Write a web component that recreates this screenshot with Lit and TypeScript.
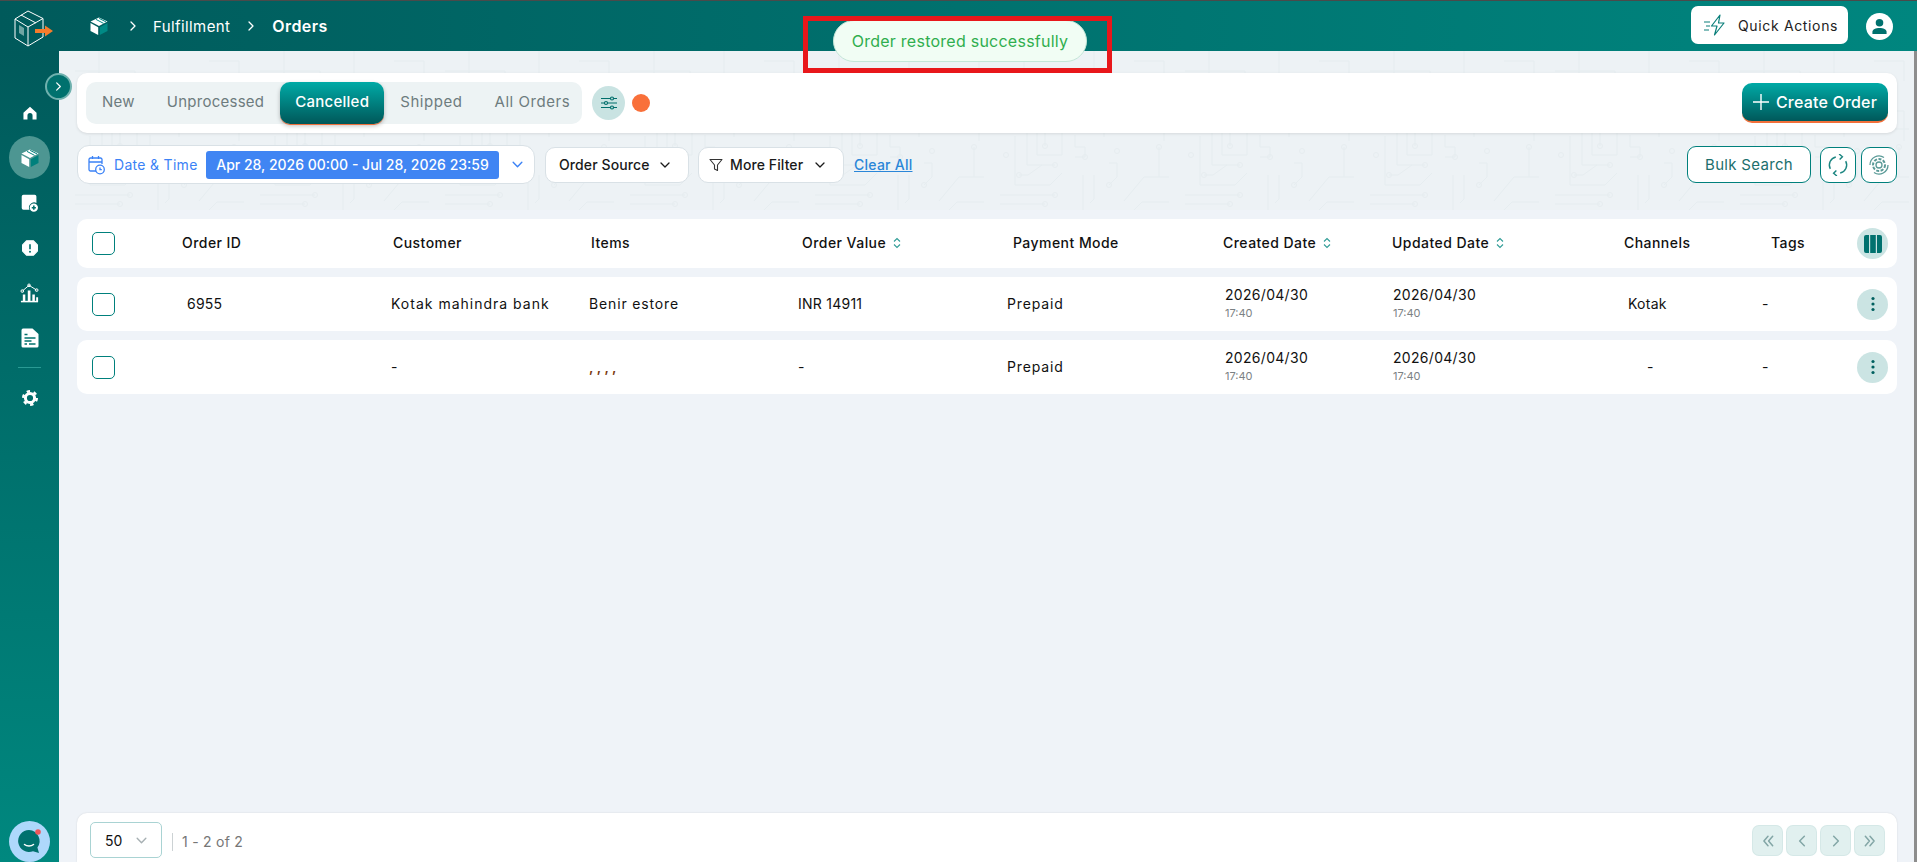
import { html, css, LitElement, svg } from "lit";
import { customElement } from "lit/decorators.js";

const chevron = (size = 12, color = "currentColor", d = "M2 4l4 4 4-4") => html`<svg
  width=${size}
  height=${size}
  viewBox="0 0 12 12"
  fill="none"
  stroke=${color}
  stroke-width="1.3"
  stroke-linecap="round"
  stroke-linejoin="round"
>
  <path d=${d} />
</svg>`;

const sortIcon = html`<svg width="8" height="12" viewBox="0 0 8 12" fill="none" stroke="#2f9c96" stroke-width="1.1">
  <path d="M1 4.5L4 1.5l3 3M1 7.5l3 3 3-3" />
</svg>`;

const boxIcon = (w: number, side: string) => html`<svg width=${w} height=${w} viewBox="0 0 20 20">
  <path d="M10 1.5L18.5 5.5 10 10 1.5 5.5z" fill="#fff" />
  <path d="M1.5 7L9.2 11.2V19L1.5 15z" fill="#fff" />
  <path d="M10.8 11.2L18.5 7v8l-7.7 4z" fill=${side} />
  <path d="M7 3.4l7.6 4M10.2 2.4l7 3.6" stroke=${side} stroke-width="1" fill="none" />
</svg>`;

const navIcons = [
  { size: 16, icon: svg`<path d="M11 2.5L20 10.5V20H14.5V14.5a3.5 3.5 0 0 0-7 0V20H2V10.5z" fill="#fff"/>` },
  null,
  { size: 19, icon: svg`<path d="M4 2h13a2 2 0 0 1 2 2v7.5a6 6 0 0 0-8 8H4a2 2 0 0 1-2-2V4a2 2 0 0 1 2-2z" fill="#fff"/><circle cx="16" cy="17" r="4.8" fill="#fff"/><path d="M16 14.6v4.8M13.6 17h4.8" stroke="#00716c" stroke-width="1.8"/>` },
  { size: 18, icon: svg`<path d="M7 2.2h8l5 5v7.6l-5 5H7l-5-5V7.2z" fill="#fff" stroke="#fff" stroke-linejoin="round" stroke-width="1.5"/><path d="M11 6.5v6" stroke="#00716c" stroke-width="2"/><circle cx="11" cy="15.5" r="1.2" fill="#00716c"/>` },
  { size: 21, icon: svg`<path d="M2 20.5h18" stroke="#fff" stroke-width="1.6"/><path d="M4 13h2.6v7H4zM9.2 9h2.8v11H9.2zM14 13h2.6v7H14zM18 16h2v4h-2z" fill="#fff"/><path d="M3.5 9.5L10.5 3.5l8 5" stroke="#fff" stroke-width="1" fill="none"/><circle cx="3.5" cy="9.5" r="1.4" fill="none" stroke="#fff"/><circle cx="10.5" cy="3.5" r="1.4" fill="none" stroke="#fff"/><circle cx="18.5" cy="8.5" r="1.4" fill="none" stroke="#fff"/>` },
  { size: 22, icon: svg`<path d="M5 1.5h8.5L19.500 7v12a1.600 1.600 0 0 1-1.600 1.600H4.100A1.600 1.600 0 0 1 2.500 19V3.500a2 2 0 0 1 2.500-2z" fill="#fff"/><path d="M5.500 7.500h3M5.500 11h11M5.500 14h7M5.500 17h2.500M10 17h6.500" stroke="#00716c" stroke-width="1.400"/>` },
];

const headCells = [
  { label: "Order ID" },
  { label: "Customer" },
  { label: "Items" },
  { label: "Order Value", sort: true },
  { label: "Payment Mode" },
  { label: "Created Date", sort: true },
  { label: "Updated Date", sort: true },
  { label: "Channels" },
  { label: "Tags" },
];

const rows = [
  { id: "6955", customer: "Kotak mahindra bank", items: "Benir estore", value: "INR 14911", channel: "Kotak" },
  { id: "", customer: "-", items: ", , , ,", value: "-", channel: "-" },
];

@customElement("app-root")
export class AppRoot extends LitElement {
  static styles = css`
    :host {
      display: block;
      height: 862px;
      overflow: hidden;
      position: relative;
      font-family: Inter, "Liberation Sans", sans-serif;
      font-size: 14px;
      color: #111;
      background: #eff3f8;
    }
    .topbar {
      height: 50px;
      border-top: 1px solid #4a4a4a;
      background: linear-gradient(90deg, #005a5b, #00716e 50%, #00867f);
      display: flex;
      align-items: center;
      color: #fff;
    }
    .logo {
      width: 89px;
      padding: 5px 0 0 14px;
      flex: none;
      box-sizing: border-box;
      display: flex;
    }
    .crumbs {
      display: flex;
      align-items: center;
      font-size: 15px;
      letter-spacing: 0.4px;
    }
    .crumbs .sep {
      display: flex;
      margin: 0 14px 0 18px;
    }
    .crumbs .sep.second {
      margin: 0 15px;
    }
    .crumbs b {
      font-size: 16px;
      font-weight: 600;
    }
    .quick {
      margin-left: auto;
      width: 157px;
      height: 38px;
      box-sizing: border-box;
      background: #fff;
      border-radius: 7px;
      display: flex;
      align-items: center;
      gap: 11px;
      padding-left: 12px;
      color: #222;
      font-size: 14px;
      letter-spacing: 0.65px;
      margin-top: -2px;
    }
    .avatar {
      width: 27px;
      height: 27px;
      margin: 0 24px 0 18px;
      border-radius: 50%;
      background: #fff;
      display: flex;
      align-items: center;
      justify-content: center;
    }
    .body {
      display: flex;
      height: 811px;
    }
    .side {
      width: 59px;
      flex: none;
      background: linear-gradient(180deg, #005a5b, #00887f);
      display: flex;
      flex-direction: column;
      align-items: center;
      padding-top: 39px;
      box-sizing: border-box;
    }
    .nav {
      height: 45px;
      width: 59px;
      flex: none;
      display: flex;
      align-items: center;
      justify-content: center;
    }
    .nav .active {
      width: 41px;
      height: 43px;
      border-radius: 50%;
      background: #4d9692;
      display: flex;
      align-items: center;
      justify-content: center;
    }
    .side hr {
      width: 23px;
      border: none;
      border-top: 1px solid #2a9a94;
      margin: 7px 0;
    }
    .chat {
      margin-top: auto;
      width: 41px;
      height: 41px;
      display: flex;
    }
    .toggle {
      position: absolute;
      left: 45px;
      top: 73px;
      width: 27px;
      height: 27px;
      box-sizing: border-box;
      border-radius: 50%;
      background: #00716e;
      border: 2px solid #6fb1ae;
      display: flex;
      align-items: center;
      justify-content: center;
      z-index: 2;
    }
    .main {
      flex: 1;
      display: flex;
      flex-direction: column;
      min-width: 0;
      padding: 22px 17px 0 18px;
      border-right: 3px solid #8d8d8d;
      background-color: #eff3f8;
      background-repeat: repeat-x;
      background-image: url("data:image/svg+xml,%3Csvg xmlns='http://www.w3.org/2000/svg' width='185' height='159' fill='none' stroke='%23e6edf0'%3E%3Crect width='185' height='159' fill='%23edf2f5' stroke='none'/%3E%3Cpath d='M53 60v44h25V60M43 50v64h28M31 85v49h35l12-12M16 144h55M16 153h45M35 124h9l14-10M61 76v19M91 84v12h10v10H91M120 86v-8h75M99 124v35M110 124v24l-4 4M125 112h8v14l-8 8M140 150l20-24h40M150 159l8-8h60M175 96v30M188 96v50M16 20h60v20h60M40 0v30h40M110 0v40h30v14h30M150 10h30v20M20 70h14M170 60h10v30'/%3E%3Ccircle cx='61' cy='95' r='2.500'/%3E%3Ccircle cx='71' cy='114' r='2.500'/%3E%3Ccircle cx='71' cy='144' r='2.500'/%3E%3Ccircle cx='61' cy='153' r='2.500'/%3E%3Ccircle cx='35' cy='124' r='2.500'/%3E%3Ccircle cx='101' cy='106' r='2.500'/%3E%3Ccircle cx='133' cy='100' r='2.500'/%3E%3Ccircle cx='175' cy='96' r='2.500'/%3E%3Ccircle cx='188' cy='96' r='2.500'/%3E%3Ccircle cx='22' cy='104' r='2.500'/%3E%3Ccircle cx='125' cy='134' r='2.500'/%3E%3Ccircle cx='140' cy='42' r='2.500'/%3E%3Ccircle cx='80' cy='30' r='2.500'/%3E%3C/svg%3E");
    }
    .card {
      background: #fff;
      border-radius: 10px;
    }
    .tabbar {
      height: 60px;
      box-sizing: border-box;
      padding: 9px;
      display: flex;
      align-items: flex-start;
      box-shadow: 0 1px 3px rgba(0, 0, 0, 0.1);
      flex: none;
    }
    .tabs {
      display: flex;
      width: 496px;
      flex: none;
      height: 42px;
      background: #edf3f4;
      border-radius: 10px;
      font-size: 15px;
      letter-spacing: 0.25px;
      color: #6d7c7e;
    }
    .tab {
      padding: 0 16px 3px;
      display: flex;
      align-items: center;
      flex: none;
      white-space: nowrap;
    }
    .tab.late {
      letter-spacing: 0.55px;
    }
    .tab.on {
      width: 104px;
      box-sizing: border-box;
      justify-content: center;
      padding: 0 0 3px;
      border-radius: 10px;
      color: #fff;
      font-weight: 500;
      background: linear-gradient(180deg, #00aaa6, #005759);
      box-shadow: 0 1px 0 #f0703c, 0 2px 4px rgba(0, 0, 0, 0.25);
    }
    .tune {
      width: 33px;
      height: 34px;
      margin: 4px 0 0 10px;
      border-radius: 50%;
      background: #c9e3e2;
      display: flex;
      align-items: center;
      justify-content: center;
    }
    .dot {
      width: 18px;
      height: 18px;
      margin: 12px 0 0 7px;
      border-radius: 50%;
      background: #f9703a;
    }
    .create {
      margin-left: auto;
      margin-top: 1px;
      width: 146px;
      height: 40px;
      box-sizing: border-box;
      border-radius: 10px;
      border-bottom: 2px solid #f2703a;
      background: linear-gradient(180deg, #00aaa6, #00585a);
      color: #fff;
      display: flex;
      align-items: center;
      justify-content: center;
      gap: 7px;
      font-size: 16px;
      font-weight: 500;
      letter-spacing: 0.2px;
    }
    .filters {
      height: 39px;
      margin-top: 12px;
      display: flex;
      align-items: center;
      flex: none;
    }
    .box {
      background: #fff;
      border: 1px solid #d9e1e6;
      border-radius: 10px;
      height: 36px;
      box-sizing: border-box;
      display: flex;
      align-items: center;
      font-size: 14px;
      letter-spacing: 0.1px;
      color: #1a1a1a;
      font-weight: 500;
    }
    .date {
      width: 458px;
      height: 39px;
      padding-left: 10px;
      color: #3b82f6;
      border-radius: 12px;
    }
    .date .label {
      margin-left: 9px;
      width: 92px;
      font-weight: 400;
      letter-spacing: 0.3px;
    }
    .range {
      width: 293px;
      height: 28px;
      background: #4085f3;
      color: #fff;
      border-radius: 3px;
      display: flex;
      align-items: center;
      justify-content: center;
      font-size: 14px;
      letter-spacing: 0;
    }
    .date .caret {
      display: flex;
      margin-left: 12px;
    }
    .source {
      width: 144px;
      margin-left: 10px;
      padding-left: 13px;
      gap: 10px;
    }
    .more {
      width: 146px;
      margin-left: 9px;
      padding-left: 10px;
      gap: 7px;
    }
    .more svg:last-child {
      margin-left: 4px;
    }
    .clear {
      margin-left: 10px;
      color: #2a86d8;
      text-decoration: underline;
      font-size: 14px;
      letter-spacing: 0.25px;
      font-weight: 500;
    }
    .outline {
      border: 1px solid #00807c;
      border-radius: 9px;
      background: #fff;
      height: 36px;
      box-sizing: border-box;
      display: flex;
      align-items: center;
      justify-content: center;
    }
    .bulk {
      margin-left: auto;
      width: 124px;
      height: 37px;
      padding-bottom: 1px;
      color: #1c6f6d;
      font-size: 15px;
      letter-spacing: 0.3px;
    }
    .square {
      width: 36px;
      margin-left: 9px;
    }
    .square + .square {
      margin-left: 5px;
    }
    .head,
    .row {
      display: grid;
      align-items: center;
      padding-left: 15px;
      flex: none;
    }
    .head {
      height: 49px;
      margin-top: 35px;
      grid-template-columns: 90px 211px 198px 211px 211px 210px 169px 232px 147px 86px 31px;
      font-weight: 500;
      letter-spacing: 0.45px;
    }
    .head span {
      display: flex;
      align-items: center;
      gap: 7px;
      padding-bottom: 2px;
    }
    .row {
      height: 54px;
      margin-top: 9px;
      grid-template-columns: 95px 204px 198px 209px 209px 218px 168px 235px 134px 95px 31px;
      letter-spacing: 0.25px;
    }
    .row span {
      padding-bottom: 2px;
    }
    .row .name {
      letter-spacing: 1px;
    }
    .row .name.short {
      letter-spacing: 0.85px;
    }
    .row .dash {
      margin-left: 19px;
    }
    .row .items-odd {
      color: #7a3b10;
      font-weight: 600;
      letter-spacing: 0;
    }
    .check {
      width: 23px;
      height: 23px;
      box-sizing: border-box;
      border: 1.5px solid #00807c;
      border-radius: 5px;
    }
    .stamp {
      line-height: 18px;
      letter-spacing: 0.3px;
    }
    .stamp small {
      display: block;
      font-size: 11px;
      color: #7b8184;
      letter-spacing: 0;
    }
    .round {
      width: 31px;
      height: 31px;
      border-radius: 50%;
      background: #cbe4e3;
      display: flex;
      align-items: center;
      justify-content: center;
    }
    .pager {
      margin-top: auto;
      height: 49px;
      border-radius: 10px 10px 0 0;
      box-sizing: border-box;
      padding: 9px 13px 0;
      display: flex;
      align-items: flex-start;
      box-shadow: 0 0 2px rgba(0, 0, 0, 0.12);
      flex: none;
    }
    .size {
      width: 72px;
      height: 36px;
      box-sizing: border-box;
      border: 1px solid #a9d3d3;
      border-radius: 5px;
      display: flex;
      align-items: center;
      gap: 13px;
      padding-left: 14px;
    }
    .count {
      margin-left: 10px;
      padding-left: 9px;
      border-left: 1px solid #ccd2d4;
      height: 18px;
      align-self: center;
      line-height: 18px;
      color: #767676;
      letter-spacing: 0.25px;
    }
    .pages {
      margin-left: auto;
      display: flex;
      gap: 5px;
      margin-top: 4px;
    }
    .pages span {
      width: 29px;
      height: 29px;
      border-radius: 6px;
      background: #e1f0ef;
      box-shadow: 0 0 0 1px #d5e8e7;
      display: flex;
      align-items: center;
      justify-content: center;
    }
    .toast {
      position: absolute;
      left: 833px;
      top: 20px;
      width: 254px;
      height: 42px;
      box-sizing: border-box;
      border-radius: 21px;
      border: 1px solid #c4e6d8;
      background: #f1fdf4;
      color: #2fae4e;
      font-size: 16px;
      display: flex;
      align-items: center;
      justify-content: center;
      letter-spacing: 0.25px;
      z-index: 3;
    }
    .callout {
      position: absolute;
      left: 803px;
      top: 16px;
      width: 309px;
      height: 57px;
      box-sizing: border-box;
      border: 5px solid #e8171b;
      z-index: 4;
    }
  `;

  render() {
    return html`
      <div class="topbar">
        <div class="logo">${this.logo()}</div>
        <div class="crumbs">
          ${boxIcon(20, "#008a85")}
          <span class="sep">${chevron(12, "#fff", "M4 2l4 4-4 4")}</span>
          <span>Fulfillment</span>
          <span class="sep second">${chevron(12, "#fff", "M4 2l4 4-4 4")}</span>
          <b>Orders</b>
        </div>
        <div class="quick">
          <svg width="24" height="26" viewBox="0 0 24 26" fill="none" stroke="#0a7f7a" stroke-width="1.2" stroke-linejoin="round">
            <path d="M17 3L8.500 14h5.500l-2.500 9L21 11h-5.500z" />
            <path d="M1 10h6M3 14h4M1 18h5" />
          </svg>
          Quick Actions
        </div>
        <div class="avatar">
          <svg width="17" height="17" viewBox="0 0 18 18" fill="#00716e">
            <circle cx="9" cy="5" r="4" />
            <path d="M1.500 17v-2.500C1.500 12 5 10.500 9 10.500s7.500 1.500 7.500 4V17z" />
          </svg>
        </div>
      </div>
      <div class="body">
        <aside class="side">
          ${navIcons.map(
            (n) => html`<div class="nav">
              ${n
                ? html`<svg width=${n.size} height=${n.size} viewBox="0 0 22 22">${n.icon}</svg>`
                : html`<div class="active">${boxIcon(20, "#00807c")}</div>`}
            </div>`
          )}
          <hr />
          <div class="nav">
            <svg width="16" height="16" viewBox="0 0 16 16" fill="none" stroke="#fff">
              <circle cx="8" cy="8" r="4.600" stroke-width="3" />
              <circle cx="8" cy="8" r="6.800" stroke-width="2.400" stroke-dasharray="3.400 3.720" />
            </svg>
          </div>
          <div class="chat">
            <svg width="41" height="41" viewBox="0 0 41 41">
              <circle cx="20.500" cy="20.500" r="20.500" fill="#aed8fb" />
              <path d="M20 9a11 11 0 1 0 4 21.300l6 1.700-1.600-5.500A11 11 0 0 0 20 9z" fill="#00716e" />
              <path d="M15.500 23.500c2.500 2 6.500 2 9 0" stroke="#fff" stroke-width="1.500" fill="none" stroke-linecap="round" />
              <circle cx="29" cy="11" r="2.800" fill="#f0565a" />
            </svg>
          </div>
        </aside>
        <main class="main">
          <div class="card tabbar">
            <div class="tabs">
              <div class="tab">New</div>
              <div class="tab">Unprocessed</div>
              <div class="tab on">Cancelled</div>
              <div class="tab late">Shipped</div>
              <div class="tab late">All Orders</div>
            </div>
            <div class="tune">
              <svg width="16" height="14" viewBox="0 0 16 14" fill="none" stroke="#006e6b" stroke-width="1.200">
                <path d="M0 2.500h16M0 7h16M0 11.500h16" />
                <circle cx="11" cy="2.500" r="1.500" fill="#c9e3e2" />
                <circle cx="5" cy="7" r="1.500" fill="#c9e3e2" />
                <circle cx="11" cy="11.500" r="1.500" fill="#c9e3e2" />
              </svg>
            </div>
            <div class="dot"></div>
            <div class="create">
              <svg width="16" height="16" viewBox="0 0 16 16" stroke="#fff" stroke-width="1.400"><path d="M8 0v16M0 8h16" /></svg>
              Create Order
            </div>
          </div>
          <div class="filters">
            <div class="box date">
              <svg width="17" height="20" viewBox="0 0 17 20" fill="none" stroke="#3b82f6" stroke-width="1.300">
                <path d="M8 16H2.500A1.500 1.500 0 0 1 1 14.500V4.500A1.500 1.500 0 0 1 2.500 3h10A1.500 1.500 0 0 1 14 4.500V9M1 7h13M4.500 1v3M10.500 1v3" />
                <circle cx="12" cy="14.500" r="4.300" />
                <path d="M12 12.500v2.200h1.800" />
              </svg>
              <span class="label">Date &amp; Time</span>
              <span class="range">Apr 28, 2026 00:00 - Jul 28, 2026 23:59</span>
              <span class="caret">${chevron(13, "#3b82f6")}</span>
            </div>
            <div class="box source">Order Source ${chevron(12)}</div>
            <div class="box more">
              <svg width="14" height="14" viewBox="0 0 14 14" fill="none" stroke="#333" stroke-width="1.100" stroke-linejoin="round">
                <path d="M1 1.500h12L8.500 7v5.500L5.500 11V7z" />
              </svg>
              More Filter ${chevron(12)}
            </div>
            <span class="clear">Clear All</span>
            <div class="outline bulk">Bulk Search</div>
            <div class="outline square">
              <svg width="22" height="22" viewBox="0 0 20 20" fill="none" stroke="#1b8580" stroke-width="1.300">
                <path d="M3 13.500A7.500 7.500 0 0 1 8 2.700M17 6.500A7.500 7.500 0 0 1 12 17.300" />
                <path d="M11 0l3 2.500L11.500 5M9 20l-3-2.500L8.500 15" />
              </svg>
            </div>
            <div class="outline square">
              <svg width="22" height="22" viewBox="0 0 22 22" fill="none" stroke="#5a9a97" stroke-width="1.300">
                <circle cx="11" cy="11" r="3" />
                <circle cx="11" cy="11" r="6" stroke-dasharray="3 1.500" stroke-width="2" />
                <path d="M2 11a9 9 0 0 1 14-7.500M20 11a9 9 0 0 1-14 7.500" />
              </svg>
            </div>
          </div>
          <div class="card head">
            <div class="check"></div>
            ${headCells.map((c) => html`<span>${c.label}${c.sort ? sortIcon : ""}</span>`)}
            <div class="round">
              <svg width="18" height="18" viewBox="0 0 18 18" fill="#00716e">
                <path d="M0 2a2 2 0 0 1 2-2h3v18H2a2 2 0 0 1-2-2zM6.200 0h5.600v18H6.200zM13 0h3a2 2 0 0 1 2 2v14a2 2 0 0 1-2 2h-3z" />
              </svg>
            </div>
          </div>
          ${rows.map(
            (r) => html`<div class="card row">
              <div class="check"></div>
              <span>${r.id}</span>
              <span class="name">${r.customer}</span>
              <span class=${r.id ? "name short" : "items-odd"}>${r.items}</span>
              <span>${r.value}</span>
              <span class="name short">Prepaid</span>
              <div class="stamp">2026/04/30<small>17:40</small></div>
              <div class="stamp">2026/04/30<small>17:40</small></div>
              <span class=${r.id ? "" : "dash"}>${r.channel}</span>
              <span>-</span>
              <div class="round">
                <svg width="4" height="16" viewBox="0 0 4 16" fill="#00605f">
                  <circle cx="2" cy="2.500" r="1.600" />
                  <circle cx="2" cy="8" r="1.600" />
                  <circle cx="2" cy="13.500" r="1.600" />
                </svg>
              </div>
            </div>`
          )}
          <div class="card pager">
            <div class="size">50 ${chevron(13, "#a7b0b3")}</div>
            <div class="count">1 - 2 of 2</div>
            <div class="pages">
              <span>${chevron(14, "#83a6a6", "M6 2L2.500 6 6 10M10 2L6.500 6 10 10")}</span>
              <span>${chevron(14, "#83a6a6", "M8 2L4 6l4 4")}</span>
              <span>${chevron(14, "#83a6a6", "M4 2l4 4-4 4")}</span>
              <span>${chevron(14, "#83a6a6", "M2 2l3.500 4L2 10M6 2l3.500 4L6 10")}</span>
            </div>
          </div>
        </main>
      </div>
      <div class="toggle">${chevron(11, "#fff", "M4 2l4 4-4 4")}</div>
      <div class="toast">Order restored successfully</div>
      <div class="callout"></div>
    `;
  }

  logo() {
    return html`<svg width="41" height="38" viewBox="0 0 41 38" fill="none">
      <path d="M14 1L29 8.500V27L14 36 1 28V9zM1 9l13 8 15-8.500M14 17v19M7 5l15 8" stroke="#fff" stroke-width="1" stroke-linejoin="round" />
      <path d="M5 15l5 3v8l-5-3z" fill="#9fc4c2" opacity="0.7" />
      <path d="M21 19h10v-3.500L39 21l-8 5.500V23H21z" fill="#f57c2c" />
    </svg>`;
  }
}
